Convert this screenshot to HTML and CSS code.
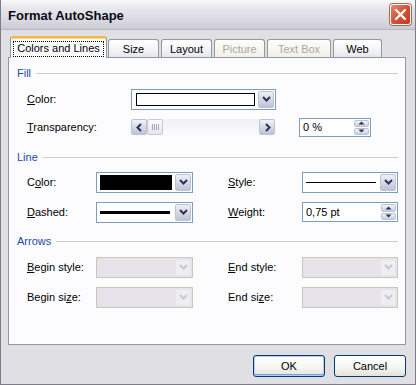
FILE: index.html
```html
<!DOCTYPE html>
<html lang="en">
  <head>
    <meta charset="UTF-8" />
    <title>Format AutoShape</title>
    <link rel="stylesheet" href="styles.css">
  </head>
  <body>
    <div class="window">
      <div class="titlebar">
        <span class="title">Format AutoShape</span>
        <span class="close">
          <svg width="13" height="13" viewBox="0 0 13 13"><path d="M2 2 L11 11 M11 2 L2 11" stroke="#fff" stroke-width="2.4" stroke-linecap="round"/></svg>
        </span>
      </div>

      <div class="dlg-body">
        <div class="tabs">
          <div class="tab active"><span class="focus">Colors and Lines</span></div>
          <div class="tab tab-size">Size</div>
          <div class="tab tab-layout">Layout</div>
          <div class="tab tab-picture disabled">Picture</div>
          <div class="tab tab-textbox disabled">Text Box</div>
          <div class="tab tab-web">Web</div>
        </div>

        <div class="panel">
          <!-- fill -->
          <div class="group-head"><span>Fill</span></div>
          <div class="row row-fill1">
            <span class="lbl lbl-fill"><u>C</u>olor:</span>
            <div class="combo combo-fill">
              <div class="combo-field"><span class="swatch-white"></span></div>
              <span class="combo-btn"><svg width="9" height="6" viewBox="0 0 9 6"><path d="M1 1 L4.5 4.5 L8 1" fill="none" stroke="#2b3550" stroke-width="2"/></svg></span>
            </div>
          </div>
          <div class="row row-fill2">
            <span class="lbl lbl-fill"><u>T</u>ransparency:</span>
            <div class="scroll">
              <span class="sb-btn"><svg width="7" height="9" viewBox="0 0 7 9"><path d="M5 1 L1.5 4.5 L5 8" fill="none" stroke="#2b3550" stroke-width="2"/></svg></span>
              <span class="sb-thumb"><i></i><i></i><i></i><i></i></span>
              <span class="sb-track"></span>
              <span class="sb-btn"><svg width="7" height="9" viewBox="0 0 7 9"><path d="M2 1 L5.5 4.5 L2 8" fill="none" stroke="#2b3550" stroke-width="2"/></svg></span>
            </div>
            <div class="spin spin-pct">
              <span class="spin-text">0 %</span>
              <span class="spin-btns">
                <span class="spin-btn"><svg width="7" height="4" viewBox="0 0 7 4"><path d="M0.5 3.5 L3.5 0.5 L6.5 3.5Z" fill="#2b3550"/></svg></span>
                <span class="spin-btn"><svg width="7" height="4" viewBox="0 0 7 4"><path d="M0.5 0.5 L3.5 3.5 L6.5 0.5Z" fill="#2b3550"/></svg></span>
              </span>
            </div>
          </div>

          <!-- line -->
          <div class="group-head group-line"><span>Line</span></div>
          <div class="row row-line1">
            <span class="lbl lbl-line">C<u>o</u>lor:</span>
            <div class="combo combo-small">
              <div class="combo-field"><span class="swatch-black"></span></div>
              <span class="combo-btn"><svg width="9" height="6" viewBox="0 0 9 6"><path d="M1 1 L4.5 4.5 L8 1" fill="none" stroke="#2b3550" stroke-width="2"/></svg></span>
            </div>
            <span class="lbl lbl-right"><u>S</u>tyle:</span>
            <div class="combo combo-right">
              <div class="combo-field"><span class="stroke-thin"></span></div>
              <span class="combo-btn"><svg width="9" height="6" viewBox="0 0 9 6"><path d="M1 1 L4.5 4.5 L8 1" fill="none" stroke="#2b3550" stroke-width="2"/></svg></span>
            </div>
          </div>
          <div class="row row-line2">
            <span class="lbl lbl-line"><u>D</u>ashed:</span>
            <div class="combo combo-small">
              <div class="combo-field"><span class="stroke-thick"></span></div>
              <span class="combo-btn"><svg width="9" height="6" viewBox="0 0 9 6"><path d="M1 1 L4.5 4.5 L8 1" fill="none" stroke="#2b3550" stroke-width="2"/></svg></span>
            </div>
            <span class="lbl lbl-right"><u>W</u>eight:</span>
            <div class="spin spin-weight">
              <span class="spin-text">0,75 pt</span>
              <span class="spin-btns">
                <span class="spin-btn"><svg width="7" height="4" viewBox="0 0 7 4"><path d="M0.5 3.5 L3.5 0.5 L6.5 3.5Z" fill="#2b3550"/></svg></span>
                <span class="spin-btn"><svg width="7" height="4" viewBox="0 0 7 4"><path d="M0.5 0.5 L3.5 3.5 L6.5 0.5Z" fill="#2b3550"/></svg></span>
              </span>
            </div>
          </div>

          <!-- arrows -->
          <div class="group-head group-arrows"><span>Arrows</span></div>
          <div class="row row-arr1">
            <span class="lbl lbl-line"><u>B</u>egin style:</span>
            <div class="combo combo-small off">
              <div class="combo-field"></div>
              <span class="combo-btn"><svg width="9" height="6" viewBox="0 0 9 6"><path d="M1 1 L4.5 4.5 L8 1" fill="none" stroke="#c9c7d4" stroke-width="2"/></svg></span>
            </div>
            <span class="lbl lbl-right"><u>E</u>nd style:</span>
            <div class="combo combo-right off">
              <div class="combo-field"></div>
              <span class="combo-btn"><svg width="9" height="6" viewBox="0 0 9 6"><path d="M1 1 L4.5 4.5 L8 1" fill="none" stroke="#c9c7d4" stroke-width="2"/></svg></span>
            </div>
          </div>
          <div class="row row-arr2">
            <span class="lbl lbl-line">Begin si<u>z</u>e:</span>
            <div class="combo combo-small off">
              <div class="combo-field"></div>
              <span class="combo-btn"><svg width="9" height="6" viewBox="0 0 9 6"><path d="M1 1 L4.5 4.5 L8 1" fill="none" stroke="#c9c7d4" stroke-width="2"/></svg></span>
            </div>
            <span class="lbl lbl-right">End si<u>z</u>e:</span>
            <div class="combo combo-right off">
              <div class="combo-field"></div>
              <span class="combo-btn"><svg width="9" height="6" viewBox="0 0 9 6"><path d="M1 1 L4.5 4.5 L8 1" fill="none" stroke="#c9c7d4" stroke-width="2"/></svg></span>
            </div>
          </div>
        </div>

        <div class="buttons">
          <button class="btn btn-default">OK</button>
          <button class="btn">Cancel</button>
        </div>
      </div>
    </div>
  </body>
</html>
```

FILE: styles.css
```css
body {
  margin: 0;
  font-family: "Liberation Sans", Arial, sans-serif;
  font-size: 11px;
  color: #000;
  background: #e0dfe3;
}

.window {
  width: 416px;
  height: 385px;
  box-sizing: border-box;
  border-left: 1px solid #7c7b86;
  border-right: 1px solid #7c7b86;
  border-bottom: 1px solid #7c7b86;
  background: #e0dfe3;
  display: flex;
  flex-direction: column;
}

/* title */
.titlebar {
  height: 30px;
  display: flex;
  align-items: center;
  justify-content: space-between;
  padding: 0 4px 0 7px;
  background: linear-gradient(#f8f8fa 0%, #e6e6eb 30%, #d8d7df 75%, #cbcbd4 100%);
  border-bottom: 1px solid #b9b8c4;
  box-sizing: border-box;
}

.title {
  font-weight: bold;
  font-size: 13px;
  color: #0a0a14;
  margin-top: 1px;
}

.close {
  width: 21px;
  height: 21px;
  box-sizing: border-box;
  border: 1px solid #fff;
  border-radius: 3px;
  background: linear-gradient(135deg, #e98a6d 0%, #d5553a 45%, #bf3a20 100%);
  display: flex;
  align-items: center;
  justify-content: center;
  box-shadow: 0 0 0 1px #b4634f;
}

/* tabs */
.dlg-body {
  flex: 1;
  display: flex;
  flex-direction: column;
  padding: 6px 9px 0 7px;
}

.tabs {
  display: flex;
  align-items: flex-end;
  height: 21px;
  padding-left: 2px;
  position: relative;
  z-index: 1;
}

.tab {
  height: 18px;
  box-sizing: border-box;
  border: 1px solid #919b9c;
  border-bottom: none;
  border-radius: 3px 3px 0 0;
  background: linear-gradient(#ffffff, #f3f3f7 60%, #e6e5ee);
  display: flex;
  align-items: center;
  justify-content: center;
  margin-right: 2px;
  padding-top: 1px;
}

.tab.disabled {
  color: #aca899;
  background: linear-gradient(#fdfdfb, #f1f0ea);
}

.tab.active {
  width: 97px;
  height: 22px;
  margin-bottom: -1px;
  background: #fcfcfe;
  border-top: 2px solid #f2b64a;
  box-shadow: inset 0 1px 0 #ffd98a;
  margin-right: 1px;
}

.focus {
  border: 1px dotted #000;
  padding: 0 3px 1px;
  line-height: 13px;
}

.tab-size { width: 51px; }
.tab-layout { width: 51px; }
.tab-picture { width: 51px; }
.tab-textbox { width: 64px; }
.tab-web { width: 49px; }

.panel {
  height: 288px;
  box-sizing: border-box;
  border: 1px solid #919b9c;
  background: #fcfcfe;
  padding: 8px 7px 0 8px;
}

/* group headings */
.group-head {
  height: 14px;
  display: flex;
  align-items: center;
  color: #1e4aa8;
}

.group-head span {
  padding-right: 5px;
}

.group-head::after {
  content: "";
  flex: 1;
  height: 1px;
  background: #d0d0bf;
  margin-top: 1px;
}

.group-line { margin-top: 12px; }
.group-arrows { margin-top: 11px; }

/* rows */
.row {
  height: 22px;
  display: flex;
  align-items: center;
  padding-left: 10px;
}

.row-fill1 { margin-top: 8px; }
.row-fill2 { margin-top: 6px; }
.row-line1 { margin-top: 7px; }
.row-line2 { margin-top: 8px; }
.row-arr1 { margin-top: 8px; }
.row-arr2 { margin-top: 8px; }

.lbl-fill { width: 104px; }
.lbl-line { width: 69px; }
.lbl-right {
  width: 74px;
  margin-left: 35px;
}

/* combo boxes */
.combo {
  height: 21px;
  box-sizing: border-box;
  border: 1px solid #7f9db9;
  background: #fff;
  display: flex;
  padding: 1px;
}

.combo-fill { width: 145px; }
.combo-small { width: 97px; }
.combo-right { width: 96px; }

.combo-field {
  flex: 1;
  display: flex;
  align-items: center;
  padding: 0 2px;
}

.combo-btn {
  width: 16px;
  box-sizing: border-box;
  border: 1px solid #bcc2d8;
  border-radius: 2px;
  background: linear-gradient(#eef0f6, #cdd0df 70%, #bec2d4);
  display: flex;
  align-items: center;
  justify-content: center;
}

.combo.off {
  border-color: #c9c7ba;
  background: #e6e3ea;
}

.combo.off .combo-btn {
  border-color: #e6e3ea;
  background: #eeedf0;
}

.swatch-white {
  flex: 1;
  height: 13px;
  box-sizing: border-box;
  border: 1px solid #000;
  background: #fff;
  margin: 0 1px 0 1px;
}

.swatch-black {
  flex: 1;
  height: 15px;
  background: #000;
  margin-right: 1px;
}

.stroke-thick {
  flex: 1;
  height: 3px;
  background: #000;
  margin-right: 3px;
}

.stroke-thin {
  flex: 1;
  height: 1px;
  background: #000;
  margin-right: 2px;
}

/* transparency scrollbar */
.scroll {
  width: 144px;
  height: 16px;
  display: flex;
  background: linear-gradient(#f0f0f5, #fbfbfd);
}

.sb-btn {
  width: 16px;
  height: 16px;
  box-sizing: border-box;
  border: 1px solid #bcc2d8;
  border-radius: 2px;
  background: linear-gradient(#f2f3f8, #cdd0df 70%, #bec2d4);
  display: flex;
  align-items: center;
  justify-content: center;
}

.sb-thumb {
  width: 16px;
  height: 16px;
  box-sizing: border-box;
  border: 1px solid #c8cadb;
  border-radius: 2px;
  background: linear-gradient(#fbfbfd, #e4e4ee);
  display: flex;
  align-items: center;
  justify-content: center;
  gap: 1px;
}

.sb-thumb i {
  width: 1px;
  height: 6px;
  background: #a5a7bc;
}

.sb-track {
  flex: 1;
}

/* spinners */
.spin {
  height: 19px;
  box-sizing: border-box;
  border: 1px solid #7f9db9;
  background: #fff;
  display: flex;
  align-items: center;
  padding: 1px 1px 1px 3px;
}

.spin-pct {
  width: 72px;
  margin-left: 24px;
}

.spin-weight {
  width: 96px;
  height: 20px;
}

.spin-text {
  flex: 1;
}

.spin-btns {
  width: 15px;
  height: 100%;
  display: flex;
  flex-direction: column;
  gap: 1px;
}

.spin-btn {
  flex: 1;
  border: 1px solid #bcc2d8;
  border-radius: 2px;
  background: linear-gradient(#f2f3f8, #cacdde);
  display: flex;
  align-items: center;
  justify-content: center;
}

/* buttons */
.buttons {
  display: flex;
  justify-content: flex-end;
  gap: 9px;
  padding-top: 10px;
}

.btn {
  width: 72px;
  height: 22px;
  font-family: "Liberation Sans", Arial, sans-serif;
  font-size: 11px;
  color: #000;
  border: 1px solid #003c74;
  border-radius: 3px;
  background: linear-gradient(#ffffff, #f4f4f0 60%, #e3e2da);
  padding: 0;
}

.btn-default {
  box-shadow: inset 0 0 0 1px #b6cdf2, inset 0 -1px 0 1px #7aa0e0;
}
```
